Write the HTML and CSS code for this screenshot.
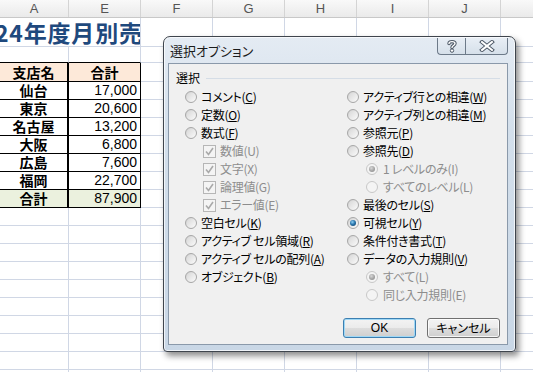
FILE: index.html
```html
<!DOCTYPE html>
<html lang="ja">
<head>
    <meta charset="UTF-8">
    <meta name="viewport" content="width=device-width, initial-scale=1.0">
    <title>選択オプション</title>
    <link rel="stylesheet" href="styles.css">
</head>
<body class="page">

    <div class="sheet">
        <div class="sheet__row sheet__row--head">
            <div class="col-head">A</div>
            <div class="col-head">E</div>
            <div class="col-head">F</div>
            <div class="col-head">G</div>
            <div class="col-head">H</div>
            <div class="col-head">I</div>
            <div class="col-head">J</div>
            <div class="col-head"></div>
        </div>

        <div class="sheet__row sheet__row--title">
            <div class="cell cell--title"><span class="title__text">24年度月別売</span></div>
            <div class="cell"></div><div class="cell"></div><div class="cell"></div>
            <div class="cell"></div><div class="cell"></div><div class="cell"></div>
        </div>

        <div class="sheet__row sheet__row--gap">
            <div class="cell cell--above"></div><div class="cell cell--above"></div>
            <div class="cell"></div><div class="cell"></div><div class="cell"></div>
            <div class="cell"></div><div class="cell"></div><div class="cell"></div>
        </div>

        <div class="sheet__row sheet__row--thead">
            <div class="cell cell--name cell--head">支店名</div>
            <div class="cell cell--num cell--head">合計</div>
            <div class="cell"></div><div class="cell"></div><div class="cell"></div>
            <div class="cell"></div><div class="cell"></div><div class="cell"></div>
        </div>

        <div class="js-rows"></div>

        <div class="js-blank"></div>
    </div>

    <div class="dialog">
        <div class="dialog__titlebar">
            <span class="dialog__caption">選択オプション</span>
            <div class="caption-btns">
                <div class="caption-btn caption-btn--help">
                    <svg width="12" height="14" viewBox="0 0 12 14">
                        <path d="M3 4.5 C3 2 9 2 9 4.5 C9 6.5 6 6.5 6 8.5" fill="none" stroke="#4d5866" stroke-width="3.4" stroke-linecap="round"/>
                        <path d="M3 4.5 C3 2 9 2 9 4.5 C9 6.5 6 6.5 6 8.5" fill="none" stroke="#fff" stroke-width="1.4" stroke-linecap="round"/>
                        <circle cx="6" cy="11.6" r="1.7" fill="#fff" stroke="#4d5866" stroke-width="1"/>
                    </svg>
                </div>
                <div class="caption-btn caption-btn--close">
                    <svg width="16" height="12" viewBox="0 0 16 12">
                        <path d="M3 2 L13 10 M13 2 L3 10" stroke="#4d5866" stroke-width="4" stroke-linecap="square"/>
                        <path d="M3 2 L13 10 M13 2 L3 10" stroke="#fff" stroke-width="2" stroke-linecap="square"/>
                    </svg>
                </div>
            </div>
        </div>

        <div class="dialog__client">
            <div class="group__head"><span class="group__label">選択</span></div>

            <div class="options">
                <div class="options__col">
                    <div class="opt"><span class="radio"></span><span>コメント(<u>C</u>)</span></div>
                    <div class="opt"><span class="radio"></span><span>定数(<u>O</u>)</span></div>
                    <div class="opt"><span class="radio"></span><span>数式(<u>F</u>)</span></div>
                    <div class="opt opt--sub opt--dis"><span class="check"><svg width="11" height="11" viewBox="0 0 11 11"><path d="M2 5.5 L4.5 8.5 L9 2" fill="none" stroke="#a9a9a9" stroke-width="1.6"/></svg></span><span>数値(U)</span></div>
                    <div class="opt opt--sub opt--dis"><span class="check"><svg width="11" height="11" viewBox="0 0 11 11"><path d="M2 5.5 L4.5 8.5 L9 2" fill="none" stroke="#a9a9a9" stroke-width="1.6"/></svg></span><span>文字(X)</span></div>
                    <div class="opt opt--sub opt--dis"><span class="check"><svg width="11" height="11" viewBox="0 0 11 11"><path d="M2 5.5 L4.5 8.5 L9 2" fill="none" stroke="#a9a9a9" stroke-width="1.6"/></svg></span><span>論理値(G)</span></div>
                    <div class="opt opt--sub opt--dis"><span class="check"><svg width="11" height="11" viewBox="0 0 11 11"><path d="M2 5.5 L4.5 8.5 L9 2" fill="none" stroke="#a9a9a9" stroke-width="1.6"/></svg></span><span>エラー値(E)</span></div>
                    <div class="opt"><span class="radio"></span><span>空白セル(<u>K</u>)</span></div>
                    <div class="opt"><span class="radio"></span><span>アクティブ セル領域(<u>R</u>)</span></div>
                    <div class="opt"><span class="radio"></span><span>アクティブ セルの配列(<u>A</u>)</span></div>
                    <div class="opt"><span class="radio"></span><span>オブジェクト(<u>B</u>)</span></div>
                </div>
                <div class="options__col">
                    <div class="opt"><span class="radio"></span><span>アクティブ行との相違(<u>W</u>)</span></div>
                    <div class="opt"><span class="radio"></span><span>アクティブ列との相違(<u>M</u>)</span></div>
                    <div class="opt"><span class="radio"></span><span>参照元(<u>P</u>)</span></div>
                    <div class="opt"><span class="radio"></span><span>参照先(<u>D</u>)</span></div>
                    <div class="opt opt--sub2 opt--dis"><span class="radio radio--on"></span><span>1 レベルのみ(I)</span></div>
                    <div class="opt opt--sub2 opt--dis"><span class="radio"></span><span>すべてのレベル(L)</span></div>
                    <div class="opt"><span class="radio"></span><span>最後のセル(<u>S</u>)</span></div>
                    <div class="opt"><span class="radio radio--on"></span><span>可視セル(<u>Y</u>)</span></div>
                    <div class="opt"><span class="radio"></span><span>条件付き書式(<u>T</u>)</span></div>
                    <div class="opt"><span class="radio"></span><span>データの入力規則(<u>V</u>)</span></div>
                    <div class="opt opt--sub2 opt--dis"><span class="radio radio--on"></span><span>すべて(L)</span></div>
                    <div class="opt opt--sub2 opt--dis"><span class="radio"></span><span>同じ入力規則(E)</span></div>
                </div>
            </div>

            <div class="dialog__buttons">
                <div class="btn btn--default">OK</div>
                <div class="btn">キャンセル</div>
            </div>
        </div>
    </div>

    <script>
    const rows = [
        ['仙台', '17,000'],
        ['東京', '20,600'],
        ['名古屋', '13,200'],
        ['大阪', '6,800'],
        ['広島', '7,600'],
        ['福岡', '22,700'],
    ]
    const empty = '<div class="cell"></div>'.repeat(6)

    let html = ''
    rows.forEach(row => {
        html += `
            <div class="sheet__row">
                <div class="cell cell--name">${row[0]}</div>
                <div class="cell cell--num">${row[1]}</div>
                ${empty}
            </div>`
    })
    html += `
        <div class="sheet__row sheet__row--total">
            <div class="cell cell--name cell--total">合計</div>
            <div class="cell cell--num cell--total">87,900</div>
            ${empty}
        </div>`
    document.querySelector('.js-rows').innerHTML = html

    let blank = ''
    for (let i = 0; i < 10; i++) {
        blank += `<div class="sheet__row">${'<div class="cell"></div>'.repeat(8)}</div>`
    }
    document.querySelector('.js-blank').innerHTML = blank
    </script>
</body>
</html>
```

FILE: styles.css
```css
*, ::after, ::before {
    box-sizing: border-box;
}
body{
    margin: 0;
    width: 533px;
    height: 372px;
    overflow: hidden;
    background: #fff;
    font-family: "Noto Sans CJK JP", sans-serif;
    position: relative;
}

/* sheet */
.sheet__row{
    display: grid;
    grid-template-columns: 69px repeat(7, 72px);
    height: 18px;
}
.sheet__row--head{
    height: 18px;
    background: linear-gradient(#f9f9f9, #eaeaea);
    border-bottom: 1px solid #c8c8c8;
}
.sheet__row--title{
    height: 29px;
    grid-template-columns: 141px repeat(6, 72px);
}
.sheet__row--gap{
    height: 16px;
}
.sheet__row--thead{
    height: 19px;
}
.col-head{
    border-right: 1px solid #d4d4d4;
    font-family: "Liberation Sans", sans-serif;
    font-size: 13px;
    color: #555;
    text-align: center;
    line-height: 17px;
}
.cell{
    border-right: 1px solid #d0d7e5;
    border-bottom: 1px solid #d0d7e5;
    white-space: nowrap;
}
.cell--title{
    overflow: hidden;
    position: relative;
}
.title__text{
    display: block;
    margin-left: -5px;
    font-size: 23px;
    font-weight: bold;
    letter-spacing: 0.8px;
    color: #1f497d;
    line-height: 28px;
}
.cell--above{
    border-bottom-color: #000;
}
.cell--name{
    border-right: 2px solid #000;
    border-bottom-color: #000;
    text-align: center;
    font-weight: bold;
    font-size: 14px;
    line-height: 17px;
}
.cell--num{
    border-right-color: #000;
    border-bottom-color: #000;
    text-align: right;
    padding-right: 3px;
    font-family: "Liberation Sans", sans-serif;
    font-size: 14px;
    line-height: 17px;
}
.cell--head{
    background: #fde9d9;
    font-family: "Noto Sans CJK JP", sans-serif;
    font-weight: bold;
    font-size: 14px;
    line-height: 18px;
    text-align: center;
    padding-right: 0;
}
.cell--total{
    background: #ebf1de;
}

/* dialog */
.dialog{
    position: absolute;
    left: 163px;
    top: 36px;
    width: 353px;
    height: 316px;
    border: 1px solid #3f454d;
    border-radius: 7px 7px 4px 4px;
    background: linear-gradient(#e4ebf3, #d3dfeb 30%, #c9d7e6);
    box-shadow: 3px 4px 6px rgba(0, 0, 0, 0.45), inset 0 0 0 1px rgba(255, 255, 255, 0.7);
    padding: 0 7px 6px 4px;
    display: flex;
    flex-direction: column;
    font-size: 12px;
    font-feature-settings: "palt";
    color: #000;
}
.dialog__titlebar{
    height: 26px;
    display: flex;
    align-items: center;
    position: relative;
}
.dialog__caption{
    font-size: 13px;
    padding-left: 2px;
    padding-top: 1px;
    color: #1b1b1b;
}
.caption-btns{
    position: absolute;
    right: 0;
    top: 1px;
    display: flex;
}
.caption-btn{
    height: 17px;
    border: 1px solid #6d7a89;
    border-top: none;
    display: flex;
    align-items: center;
    justify-content: center;
    background: linear-gradient(#e8eef5, #d6e0ea);
}
.caption-btn--help{
    width: 28px;
    border-radius: 0 0 0 4px;
    border-right: none;
}
.caption-btn--close{
    width: 43px;
    border-radius: 0 0 4px 0;
}
.dialog__client{
    flex-grow: 1;
    background: #f0f0f0;
    border: 1px solid #8a99aa;
    display: flex;
    flex-direction: column;
    padding: 6px 7px 6px 7px;
}
.group__head{
    display: flex;
    align-items: center;
    gap: 6px;
    height: 16px;
}
.group__label{
    line-height: 16px;
}
.group__head::after{
    content: '';
    flex-grow: 1;
    height: 1px;
    background: #d5dde6;
}
.options{
    display: grid;
    grid-template-columns: 162px 1fr;
    padding-left: 9px;
    margin-top: 2px;
}
.opt{
    display: flex;
    align-items: center;
    gap: 4px;
    height: 18px;
    white-space: nowrap;
    line-height: 18px;
    letter-spacing: -0.3px;
}
.opt u{
    text-underline-offset: 1px;
}
.opt--sub{
    padding-left: 18px;
}
.opt--sub2{
    padding-left: 19px;
    gap: 5px;
}
.opt--dis{
    color: #8d8d8d;
}
.radio{
    flex: none;
    position: relative;
    width: 12px;
    height: 12px;
    border-radius: 50%;
    border: 1px solid #a7a7a7;
    background: linear-gradient(135deg, #cfcfcf, #f0f0f0 70%, #fafafa);
}
.radio::before{
    content: '';
    position: absolute;
    inset: 1px;
    border-radius: 50%;
    background: linear-gradient(135deg, #d9d9d9, #f7f7f7);
}
.radio--on::after{
    content: '';
    position: absolute;
    inset: 2px;
    border-radius: 50%;
    background: radial-gradient(circle at 40% 35%, #8fd0f4, #2a76ad 45%, #0e3a5f);
}
.opt--dis .radio{
    border-color: #c8c8c8;
    background: #f4f4f4;
}
.opt--dis .radio::before{
    background: #f4f4f4;
}
.opt--dis .radio--on::after{
    background: radial-gradient(circle at 40% 35%, #d8d8d8, #a3a3a3 55%, #8a8a8a);
}
.check{
    flex: none;
    width: 13px;
    height: 13px;
    border: 1px solid #b6b6b6;
    background: #f4f4f4;
    display: flex;
    align-items: center;
    justify-content: center;
}
.check svg{
    display: block;
}
.dialog__buttons{
    margin-top: auto;
    display: flex;
    justify-content: flex-end;
    gap: 11px;
}
.btn{
    width: 73px;
    height: 20px;
    border: 1px solid #707070;
    border-radius: 3px;
    background: linear-gradient(#f3f3f3, #ebebeb 50%, #dddddd 50%, #cfcfcf);
    box-shadow: inset 0 0 0 1px rgba(255, 255, 255, 0.8);
    display: flex;
    align-items: center;
    justify-content: center;
    font-size: 12px;
    line-height: 18px;
}
.btn--default{
    border-color: #3c7fb1;
    box-shadow: inset 0 0 0 1px #9fd8f6;
    font-family: "Liberation Sans", sans-serif;
}
```
